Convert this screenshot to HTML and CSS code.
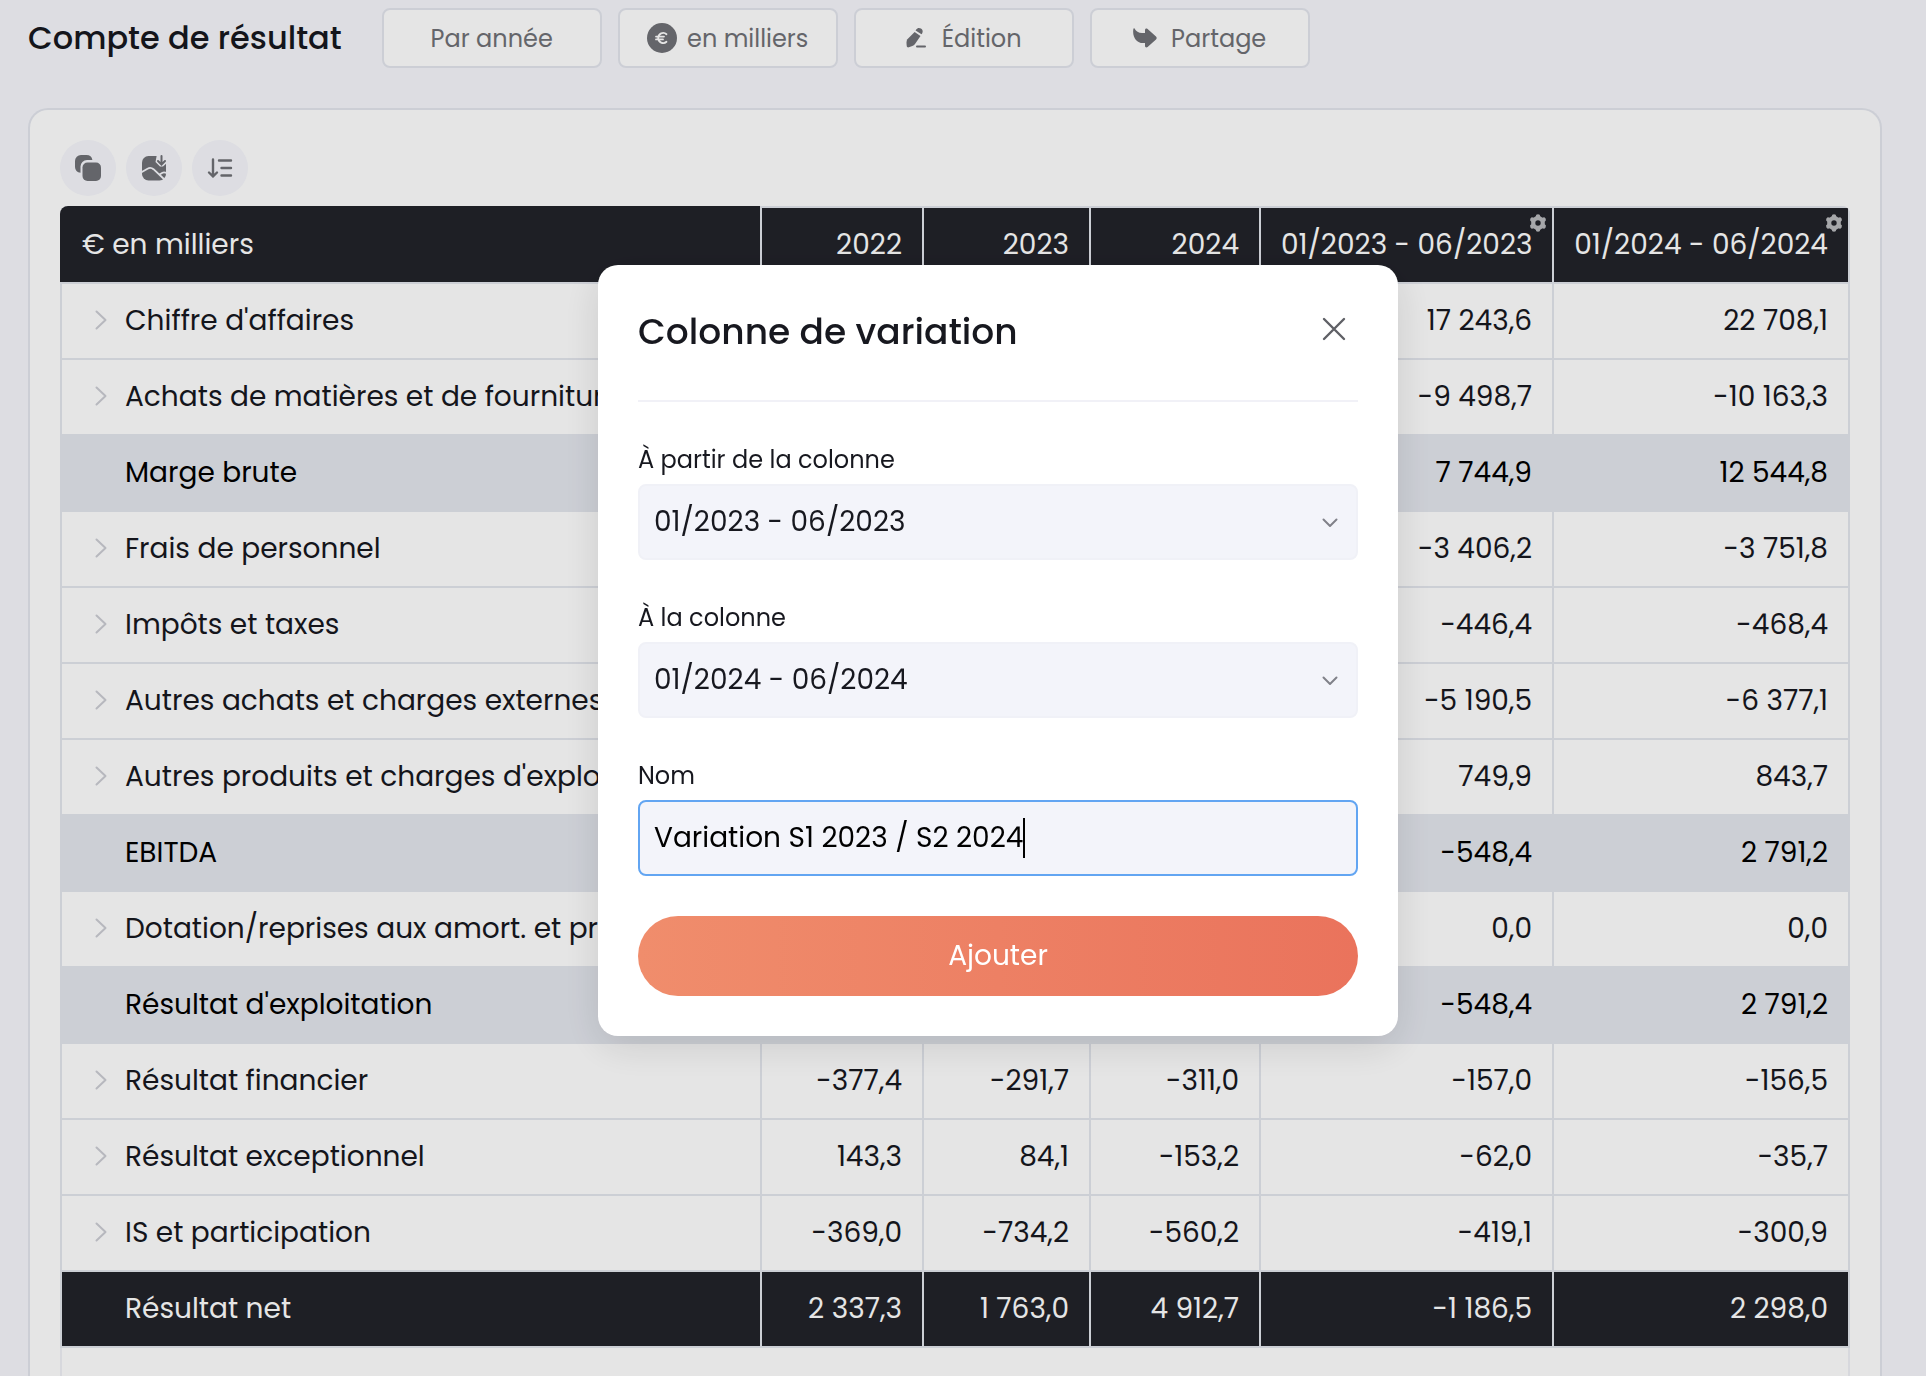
FILE: index.html
```html
<!DOCTYPE html>
<html lang="fr">
<head>
    <meta charset="utf-8">
    <meta name="viewport" content="width=device-width, initial-scale=1">
    <title>Compte de résultat</title>
    <link rel="stylesheet" href="styles.css">
</head>
<body>
    <main class="page">
        <header class="topbar">
            <h1>Compte de résultat</h1>
            <div class="filters">
                <button type="button" class="btn">Par année</button>
                <button type="button" class="btn">
                    <svg width="30" height="30" viewBox="0 0 30 30">
                        <circle cx="15" cy="15" r="15" fill="#707176"/>
                        <path d="M19.500 11.200A5 5 0 0 0 11.200 15a5 5 0 0 0 8.300 3.800M9 13.600h8M9 16.400h7" fill="none" stroke="#fff" stroke-width="1.800" stroke-linecap="round"/>
                    </svg>
                    en milliers
                </button>
                <button type="button" class="btn btn-edit">
                    <svg width="20" height="22" viewBox="0 0 20 22" fill="#707176">
                        <path d="M10.200 2.500C11.400.8 13.200.4 15 1.600c1.800 1.200 2.200 3 1.100 4.800l-.6.900-5.900-3.900z"/>
                        <path d="M8.600 5 14.500 8.900 9 17c-.7 1-1.600 1.700-2.700 2.100l-3.400 1.200c-1.200.4-2.100-.2-2.200-1.500L.5 15.400c0-1.200.2-2.200.9-3.200z"/>
                        <path d="M11 18.500h8a1 1 0 0 1 0 2h-8a1 1 0 0 1 0-2z"/>
                    </svg>
                    Édition
                </button>
                <button type="button" class="btn btn-share">
                    <svg width="24" height="20" viewBox="0 0 24 20" fill="#707176">
                        <path d="M.4.800C.6.100 1.300.1 1.700.700 3 3.500 5.500 4.800 9 4.900h3V2.200C12 .600 13.400 0 14.600 1l8.400 7.500c.9.800.9 2.200 0 3L14.600 19c-1.200 1-2.600.4-2.600-1.200v-2.700H10C3.500 15.100-1 9 .4.800z"/>
                    </svg>
                    Partage
                </button>
            </div>
        </header>

        <section class="card">
            <div class="tools">
                <button type="button" class="tool" aria-label="Copier">
                    <svg width="28" height="28" viewBox="0 0 28 28" fill="#707176">
                        <path d="M1 7a6 6 0 0 1 6-6h5.500a6 6 0 0 1 5.900 5H13a6.500 6.500 0 0 0-6.500 6.500v6.200A6 6 0 0 1 1 13z"/>
                        <rect x="8.500" y="8.500" width="18.500" height="18.500" rx="5"/>
                    </svg>
                </button>
                <button type="button" class="tool" aria-label="Exporter en image">
                    <svg width="28" height="28" viewBox="0 0 28 28">
                        <rect x="2" y="2" width="24" height="24.500" rx="6.500" fill="#707176"/>
                        <g fill="none" stroke="#f6f7fc" stroke-width="1.800">
                            <path d="M1 18.500l6.500-3.800c2.300-1.400 4-1.200 6 .5L25.500 26.500"/>
                            <path d="M19.500 20.500l3-1.800c1.200-.7 2.200-.6 4 .2"/>
                        </g>
                        <path d="M17 0h11v8l-5 4.500h-3L15.500 8z" fill="#f6f7fc"/>
                        <path d="M21.500 2v8M18 7l3.500 3.500L25 7" fill="none" stroke="#707176" stroke-width="2" stroke-linecap="round"/>
                    </svg>
                </button>
                <button type="button" class="tool" aria-label="Trier">
                    <svg width="28" height="28" viewBox="0 0 28 28" fill="none" stroke="#707176" stroke-width="2.400" stroke-linecap="round" stroke-linejoin="round">
                        <path d="M7 5.500v17M3 18.500l4 4 4-4M13 6.500h12M15.500 14H25M15.500 21.500H25"/>
                    </svg>
                </button>
            </div>

            <div class="table-wrap">
                <table>
                    <colgroup>
                        <col>
                        <col class="col-2022">
                        <col class="col-2023">
                        <col class="col-2024">
                        <col class="col-s1">
                        <col class="col-s2">
                    </colgroup>
                    <thead>
                        <tr>
                            <th scope="col">€ en milliers</th>
                            <th scope="col">2022</th>
                            <th scope="col">2023</th>
                            <th scope="col">2024</th>
                            <th scope="col">01/2023 - 06/2023<button type="button" class="gear" aria-label="Réglages"><svg width="18" height="18" viewBox="0 0 18 18"><use href="#gear"/></svg></button></th>
                            <th scope="col">01/2024 - 06/2024<button type="button" class="gear" aria-label="Réglages"><svg width="18" height="18" viewBox="0 0 18 18"><use href="#gear"/></svg></button></th>
                        </tr>
                    </thead>
                    <tbody id="rows"></tbody>
                </table>
            </div>
        </section>
    </main>

    <div class="overlay">
        <form class="modal" role="dialog" aria-labelledby="modal-title">
            <div class="modal-head">
                <h2 id="modal-title">Colonne de variation</h2>
                <button type="button" class="close" aria-label="Fermer">
                    <svg width="24" height="24" viewBox="0 0 24 24" fill="none" stroke="#5f6066" stroke-width="2.400" stroke-linecap="round"><path d="M2 2l20 20M22 2L2 22"/></svg>
                </button>
            </div>
            <div class="field">
                <label for="from">À partir de la colonne</label>
                <div class="control">
                    <select id="from">
                        <option>01/2023 - 06/2023</option>
                        <option>01/2024 - 06/2024</option>
                    </select>
                    <svg width="16" height="10" viewBox="0 0 16 10"><use href="#down"/></svg>
                </div>
            </div>
            <div class="field">
                <label for="to">À la colonne</label>
                <div class="control">
                    <select id="to">
                        <option>01/2024 - 06/2024</option>
                        <option>01/2023 - 06/2023</option>
                    </select>
                    <svg width="16" height="10" viewBox="0 0 16 10"><use href="#down"/></svg>
                </div>
            </div>
            <div class="field">
                <label for="name">Nom</label>
                <div class="control">
                    <input type="text" id="name" value="Variation S1 2023 / S2 2024">
                    <span class="caret" id="caret"></span>
                </div>
            </div>
            <button type="submit" class="submit">Ajouter</button>
        </form>
    </div>

    <svg class="sprite" aria-hidden="true">
        <symbol id="gear" viewBox="0 0 18 18">
            <g fill="none" stroke="#b9babe">
                <circle cx="9" cy="9" r="4.800" stroke-width="4.200"/>
                <path stroke-width="4.600" stroke-linecap="round" d="M9 2.500v.8M9 14.700v.8M3.400 5.700l.7.400M13.900 11.900l.7.400M3.400 12.300l.7-.4M13.900 6.100l.7-.4"/>
            </g>
        </symbol>
        <symbol id="right" viewBox="0 0 12 20">
            <path fill="none" stroke="#cccdd4" stroke-width="2" stroke-linecap="round" stroke-linejoin="round" d="M1.500 1.500 10.500 10l-9 8.500"/>
        </symbol>
        <symbol id="down" viewBox="0 0 16 10">
            <path fill="none" stroke="#808189" stroke-width="2" stroke-linecap="round" stroke-linejoin="round" d="M1.500 1.500 8 8l6.500-6.500"/>
        </symbol>
    </svg>

    <script src="script.js"></script>
</body>
</html>
```

FILE: styles.css
```css
* {
    box-sizing: border-box;
}

body {
    font-family: Poppins, Inter, "Noto Sans", sans-serif;
    background-color: #f6f7fc;
    color: #17181f;
    margin: 0;
}

button, input, select {
    font-family: inherit;
}

.page {
    display: flex;
    flex-direction: column;
    min-height: 100vh;
    padding: 8px 44px 0 28px;
}

.topbar {
    display: flex;
    align-items: center;
    gap: 40px;
}

h1 {
    font-size: 32px;
    font-weight: 500;
    line-height: 60px;
    margin: 0;
    white-space: nowrap;
}

.filters {
    display: flex;
    gap: 16px;
}

.btn {
    display: flex;
    align-items: center;
    justify-content: center;
    gap: 10px;
    width: 220px;
    height: 60px;
    padding: 0;
    font-size: 24px;
    color: #707176;
    background-color: white;
    border: 2px solid #e4e6ee;
    border-radius: 8px;
    white-space: nowrap;
}

.btn-edit {
    gap: 16px;
}

.btn-share {
    gap: 14px;
}

.card {
    display: flex;
    flex-direction: column;
    flex: 1;
    margin-top: 40px;
    padding: 30px 30px 0;
    background-color: white;
    border: 2px solid #e4e6ee;
    border-bottom: none;
    border-radius: 20px 20px 0 0;
}

.tools {
    display: flex;
    gap: 10px;
}

.tool {
    display: flex;
    align-items: center;
    justify-content: center;
    width: 56px;
    height: 56px;
    padding: 0;
    background-color: #f6f7fc;
    border: none;
    border-radius: 50%;
}

/* les filets gris continuent sous la dernière ligne */
.table-wrap {
    flex: 1;
    margin-top: 10px;
    border-radius: 8px 8px 0 0;
    box-shadow: inset 2px 0 #f0f1f6, inset -2px 0 #f0f1f6;
    overflow: hidden;
}

table {
    width: 100%;
    table-layout: fixed;
    border-collapse: collapse;
    font-size: 28px;
}

.col-2022 { width: 162px; }
.col-2023 { width: 167px; }
.col-2024 { width: 170px; }
.col-s1 { width: 293px; }
.col-s2 { width: 296px; }

th, td {
    position: relative;
    height: 76px;
    padding: 0 20px;
    border: 2px solid #e4e7ee;
    font-weight: 400;
    text-align: right;
    white-space: nowrap;
}

th:first-child {
    text-align: left;
}

thead th, .total th, .total td {
    color: white;
    background-color: #22232a;
}

thead th:first-child {
    border-top-color: #22232a;
    border-left-color: #22232a;
}

.sub th, .sub td {
    color: black;
    background-color: #e4e7ee;
}

.label {
    display: flex;
    align-items: center;
    gap: 18px;
    padding-left: 13px;
}

.label svg {
    flex: none;
    margin-bottom: 3px;
}

.label span {
    margin-left: 30px;
}

.gear {
    position: absolute;
    top: 6px;
    right: 5px;
    padding: 0;
    border: none;
    background: none;
    line-height: 0;
}

.overlay {
    position: fixed;
    inset: 0;
    display: flex;
    justify-content: center;
    align-items: flex-start;
    padding: 265px 0 0 70px;
    background-color: rgba(0, 0, 0, 0.1);
}

.modal {
    width: 800px;
    padding: 40px;
    background-color: white;
    border-radius: 20px;
    box-shadow: 0 10px 40px rgba(0, 0, 0, 0.12);
}

.modal-head {
    display: flex;
    justify-content: space-between;
    align-items: flex-start;
    height: 97px;
    margin-bottom: 40px;
    border-bottom: 2px solid #f1f1f7;
}

h2 {
    font-size: 36px;
    font-weight: 500;
    line-height: 54px;
    margin: 0;
}

.close {
    padding: 12px;
    border: none;
    background: none;
    line-height: 0;
}

.field {
    margin-bottom: 40px;
}

label {
    display: block;
    font-size: 24px;
    line-height: 36px;
    margin-bottom: 6px;
}

.control {
    position: relative;
}

.control svg {
    position: absolute;
    top: 34px;
    right: 20px;
    pointer-events: none;
}

select, input {
    display: block;
    width: 100%;
    height: 76px;
    padding: 0 14px;
    font-size: 28px;
    color: #17181f;
    background-color: #f3f4fa;
    border: 2px solid #f0f1f7;
    border-radius: 8px;
    appearance: none;
    outline: none;
}

select {
    padding-bottom: 2px;
}

input {
    color: black;
    border-color: #62a5f2;
    caret-color: transparent;
}

.caret {
    position: absolute;
    top: 18px;
    width: 2px;
    height: 40px;
    background-color: black;
}

.submit {
    display: block;
    width: 100%;
    height: 80px;
    border: none;
    border-radius: 40px;
    font-size: 28px;
    color: white;
    background: linear-gradient(90deg, #f08d6c, #ea735c);
}

.sprite {
    display: none;
}
```

FILE: script.js
```js
// [label, type, 2022, 2023, 2024, 01-06/2023, 01-06/2024]
const rows = [
    ["Chiffre d'affaires", "", "", "", "", "17 243,6", "22 708,1"],
    ["Achats de matières et de fournitures", "", "", "", "", "-9 498,7", "-10 163,3"],
    ["Marge brute", "sub", "", "", "", "7 744,9", "12 544,8"],
    ["Frais de personnel", "", "", "", "", "-3 406,2", "-3 751,8"],
    ["Impôts et taxes", "", "", "", "", "-446,4", "-468,4"],
    ["Autres achats et charges externes", "", "", "", "", "-5 190,5", "-6 377,1"],
    ["Autres produits et charges d'exploitation", "", "", "", "", "749,9", "843,7"],
    ["EBITDA", "sub", "", "", "", "-548,4", "2 791,2"],
    ["Dotation/reprises aux amort. et prov.", "", "", "", "", "0,0", "0,0"],
    ["Résultat d'exploitation", "sub", "", "", "", "-548,4", "2 791,2"],
    ["Résultat financier", "", "-377,4", "-291,7", "-311,0", "-157,0", "-156,5"],
    ["Résultat exceptionnel", "", "143,3", "84,1", "-153,2", "-62,0", "-35,7"],
    ["IS et participation", "", "-369,0", "-734,2", "-560,2", "-419,1", "-300,9"],
    ["Résultat net", "total", "2 337,3", "1 763,0", "4 912,7", "-1 186,5", "2 298,0"]
];

const chevron = '<svg width="12" height="20" viewBox="0 0 12 20"><use href="#right"/></svg>';

document.getElementById("rows").innerHTML = rows.map(([label, type, ...values]) => `
    <tr class="${type}">
        <th scope="row"><div class="label">${type ? `<span>${label}</span>` : chevron + label}</div></th>
        ${values.map(v => `<td>${v}</td>`).join("")}
    </tr>
`).join("");

// place le curseur à la fin du texte saisi
const nameInput = document.getElementById("name");
const caret = document.getElementById("caret");

function moveCaret() {
    const style = getComputedStyle(nameInput);
    const ctx = document.createElement("canvas").getContext("2d");
    ctx.font = `${style.fontSize} ${style.fontFamily}`;
    caret.style.left = Math.round(16 + ctx.measureText(nameInput.value).width) + "px";
}

nameInput.addEventListener("input", moveCaret);
nameInput.focus();
moveCaret();
```
